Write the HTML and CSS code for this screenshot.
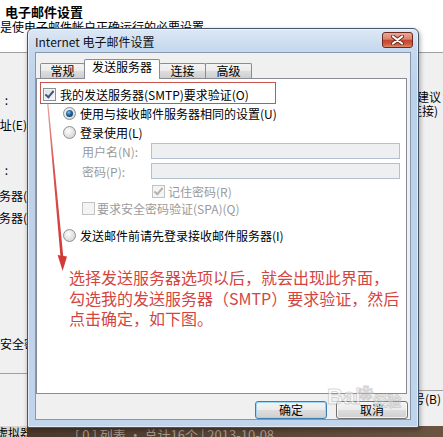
FILE: index.html
```html
<!DOCTYPE html>
<html lang="zh-CN">
<head>
  <meta charset="UTF-8">
  <meta name="viewport" content="width=device-width, initial-scale=1.0">
  <title>Internet 电子邮件设置</title>
  <link rel="stylesheet" href="styles.css">
</head>
<body>
  <div class="screen">

    <!-- account settings window behind the dialog -->
    <div class="bg-window">
      <div class="bg-head">
        <div class="bg-title">电子邮件设置</div>
        <div class="bg-sub">是使电子邮件帐户正确运行的必要设置。</div>
      </div>
      <div class="bg-body">
        <div class="bg-left">
          <div class="bg-label short f-name">您的姓名　:</div>
          <div class="bg-label f-mail">电子邮件地址(E)</div>
          <div class="bg-label short f-type">帐户类型　:</div>
          <div class="bg-label f-in">接收邮件服务器(</div>
          <div class="bg-label f-out">发送邮件服务器(</div>
          <div class="bg-label start f-spa">安全密码验证</div>
          <div class="bg-rule f-rule-left"></div>
        </div>
        <div class="bg-right">
          <div class="bg-label r-tip">建议：</div>
          <div class="bg-label r-link">连接)</div>
          <div class="bg-rule r-rule"></div>
          <div class="bg-label r-next">号(B)</div>
        </div>
      </div>
      <div class="bg-taskbar">
        <div class="task-left">虚拟器</div>
        <div class="task-right">[ 0 ] 列表 · 总计16个 | 2013-10-08</div>
      </div>
    </div>

    <!-- Internet 电子邮件设置 dialog -->
    <div class="dialog">
      <div class="titlebar">
        <div class="title">Internet 电子邮件设置</div>
        <div class="close">
          <svg width="13" height="10" viewBox="0 0 13 10">
            <path d="M2 1.5 L11 8.5 M11 1.5 L2 8.5" stroke="#6b2a20" stroke-width="4" stroke-linecap="round"/>
            <path d="M2 1.5 L11 8.5 M11 1.5 L2 8.5" stroke="#fff" stroke-width="2.2" stroke-linecap="round"/>
          </svg>
        </div>
      </div>

      <div class="client">
        <div class="tabs">
          <div class="tab t-general">常规</div>
          <div class="tab active t-send">发送服务器</div>
          <div class="tab t-conn">连接</div>
          <div class="tab t-adv">高级</div>
        </div>

        <div class="panel">
          <div class="opt main">
            <span class="check on"></span>
            <span>我的发送服务器(SMTP)要求验证(O)</span>
          </div>
          <div class="opt sub">
            <span class="radio on"></span>
            <span>使用与接收邮件服务器相同的设置(U)</span>
          </div>
          <div class="opt sub">
            <span class="radio"></span>
            <span>登录使用(L)</span>
          </div>
          <div class="field">
            <span class="field-label">用户名(N):</span>
            <span class="field-input"></span>
          </div>
          <div class="field">
            <span class="field-label">密码(P):</span>
            <span class="field-input"></span>
          </div>
          <div class="opt remember off">
            <span class="check on disabled"></span>
            <span>记住密码(R)</span>
          </div>
          <div class="opt spa off">
            <span class="check disabled"></span>
            <span>要求安全密码验证(SPA)(Q)</span>
          </div>
          <div class="opt sub last">
            <span class="radio"></span>
            <span>发送邮件前请先登录接收邮件服务器(I)</span>
          </div>
        </div>

        <div class="buttons">
          <button class="btn default">确定</button>
          <button class="btn">取消</button>
        </div>
      </div>
    </div>

    <!-- red annotation drawn over the screenshot -->
    <div class="note-box"></div>
    <svg class="note-arrow" width="443" height="437" viewBox="0 0 443 437">
      <defs>
        <linearGradient id="fade" x1="0" y1="0" x2="0" y2="1">
          <stop offset="0" stop-color="#e7a3a0"/>
          <stop offset="0.4" stop-color="#d9534f"/>
          <stop offset="1" stop-color="#d33a37"/>
        </linearGradient>
      </defs>
      <polygon points="47.2,104 48.4,104 63.4,258 60.6,258" fill="url(#fade)"/>
      <polygon points="57.6,255 67,256.5 62.6,271" fill="#d33a37"/>
    </svg>
    <div class="note-text">
      选择发送服务器选项以后，就会出现此界面，<br>
      勾选我的发送服务器（SMTP）要求验证，然后<br>
      点击确定，如下图。
    </div>

    <div class="watermark"><span class="wm-bai">Bai</span><span class="wm-paw">❀</span><span class="wm-jy">经验</span></div>
  </div>
</body>
</html>
```

FILE: styles.css
```css
body {
  margin: 0;
  padding: 0;
  font-family: "Noto Sans CJK SC", "Liberation Sans", sans-serif;
  font-size: 12px;
  color: #000;
  background: #f0f0f0;
}

.screen {
  position: relative;
  width: 443px;
  height: 437px;
  overflow: hidden;
}

/* ---------- background window ---------- */

.bg-head {
  height: 52px;
  background: #fff;
  border-bottom: 1px solid #a0a0a0;
}

.bg-title {
  padding: 4px 0 0 5px;
  font-size: 13px;
  font-weight: bold;
  line-height: 15px;
}

.bg-sub {
  margin-top: 1px;
  line-height: 14px;
  white-space: nowrap;
}

.bg-body {
  height: 373px;
  display: flex;
  justify-content: space-between;
  background: #f0f0f0;
}

.bg-left {
  width: 27px;
  overflow: hidden;
  display: flex;
  flex-direction: column;
  align-items: flex-end;
}

.bg-right {
  width: 24px;
  overflow: hidden;
  display: flex;
  flex-direction: column;
  align-items: flex-start;
}

.bg-label {
  white-space: nowrap;
  line-height: 14px;
}

.bg-label.short { margin-right: 19px; }
.bg-label.start { align-self: flex-start; }

.bg-rule {
  align-self: stretch;
  height: 1px;
  background: #a0a0a0;
}

.f-name { margin-top: 40px; }
.f-mail { margin-top: 11px; }
.f-type { margin-top: 31px; }
.f-in { margin-top: 12px; }
.f-out { margin-top: 8px; }
.f-spa { margin-top: 112px; }
.f-rule-left { margin-top: 22px; }

.r-tip { margin-top: 37px; margin-left: -2px; line-height: 13px; }
.r-link { margin-top: 1px; margin-left: -9px; line-height: 13px; }
.r-rule { margin-top: 273px; }
.r-next { margin-top: 1px; margin-left: -6px; }

.bg-taskbar {
  height: 12px;
  display: flex;
  overflow: hidden;
}

.task-left {
  width: 27px;
  background: #d9d5cf;
  font-size: 12px;
  line-height: 14px;
  text-indent: -4px;
  white-space: nowrap;
  overflow: hidden;
}

.task-right {
  flex: 1;
  background: linear-gradient(90deg, #4b3a2d, #5d4737 60%, #6b5442);
  color: #a69a90;
  font-size: 13px;
  line-height: 17px;
  padding-left: 48px;
  white-space: nowrap;
  overflow: hidden;
}

/* ---------- dialog ---------- */

.dialog {
  position: absolute;
  left: 27px;
  top: 28px;
  width: 392px;
  height: 400px;
  box-sizing: border-box;
  padding: 0 7px 7px;
  border: 1px solid #45566b;
  border-radius: 6px 6px 2px 2px;
  background: linear-gradient(180deg, #dde8f5 0, #c5d8ee 22px, #bcd1ea 60px, #c0d5ec 100%);
  box-shadow: inset 0 0 0 1px rgba(255, 255, 255, 0.55), 1px 2px 5px rgba(0, 0, 0, 0.35);
  display: flex;
  flex-direction: column;
}

.titlebar {
  height: 23px;
  display: flex;
  align-items: flex-start;
}

.title {
  flex: 1;
  padding-top: 5px;
  font-size: 12px;
  line-height: 16px;
  color: #111;
}

.close {
  width: 31px;
  height: 16px;
  margin: 3px -2px 0 0;
  box-sizing: border-box;
  border: 1px solid #6e2a1f;
  border-radius: 3px;
  background: linear-gradient(180deg, #e9a898 0, #d9826c 45%, #c4432c 50%, #cf5a40 80%, #e08a6e 100%);
  display: flex;
  justify-content: center;
  align-items: center;
}

.client {
  flex: 1;
  background: #f0f0f0;
  border: 1px solid #8598b0;
  display: flex;
  flex-direction: column;
}

.tabs {
  height: 25px;
  padding-left: 4px;
  display: flex;
  align-items: flex-end;
  position: relative;
  z-index: 1;
}

.tab {
  height: 15px;
  box-sizing: border-box;
  margin-right: -1px;
  border: 1px solid #898c95;
  border-bottom: none;
  border-radius: 2px 2px 0 0;
  background: linear-gradient(180deg, #f4f4f4 0, #ebebeb 50%, #dddddd 51%, #cfcfcf 100%);
  text-align: center;
  line-height: 14px;
}

.tab.active {
  height: 20px;
  margin-bottom: -1px;
  background: #fff;
  line-height: 14px;
}

.t-general { width: 45px; }
.t-send { width: 76px; }
.t-conn { width: 47px; }
.t-adv { width: 47px; }

.panel {
  height: 316px;
  box-sizing: border-box;
  margin-right: 3px;
  padding-top: 6px;
  border: 1px solid #898c95;
  background: #fff;
}

.opt {
  display: flex;
  align-items: center;
  gap: 4px;
  height: 19px;
  white-space: nowrap;
}

.opt.main { padding-left: 6px; }
.opt.sub { padding-left: 26px; }
.opt.sub.last { margin-top: 10px; }

.opt.off { color: #9a9a9a; }

.opt.remember {
  height: 18px;
  margin-top: 2px;
  padding-left: 115px;
  gap: 3px;
}

.opt.spa {
  height: 16px;
  padding-left: 45px;
  gap: 2px;
}

.field {
  display: flex;
  align-items: center;
  height: 18px;
  padding: 0 6px 0 45px;
  color: #9a9a9a;
  white-space: nowrap;
}

.field + .field { margin-top: 2px; }

.field-label { width: 69px; }

.field-input {
  flex: 1;
  height: 16px;
  box-sizing: border-box;
  border: 1px solid #b5c0ce;
  background: #eeeff1;
}

/* checkboxes and radio buttons, Windows 7 look */
.check {
  position: relative;
  flex: none;
  width: 13px;
  height: 13px;
  box-sizing: border-box;
  border: 1px solid #8e8f8f;
  background: linear-gradient(135deg, #dcdee1, #f8f8f8);
  box-shadow: inset 0 0 0 1px #f4f4f4;
}

.check.on::after {
  content: "";
  position: absolute;
  left: 3px;
  top: 0;
  width: 3px;
  height: 7px;
  border: solid #3d5585;
  border-width: 0 2px 2px 0;
  transform: rotate(40deg);
}

.check.disabled {
  border-color: #c2c2c2;
  background: #f4f4f4;
}

.check.disabled.on::after { border-color: #b3b3b3; }

.radio {
  position: relative;
  flex: none;
  width: 13px;
  height: 13px;
  box-sizing: border-box;
  border: 1px solid #8e8f8f;
  border-radius: 50%;
  background: radial-gradient(circle at 40% 35%, #fdfdfd 0, #e6e6e6 45%, #c9cbcd 100%);
}

.radio.on::after {
  content: "";
  position: absolute;
  left: 2px;
  top: 2px;
  width: 7px;
  height: 7px;
  border-radius: 50%;
  background: radial-gradient(circle at 40% 35%, #7fc1ee 0, #1f5d9c 45%, #0b2c55 100%);
}

.buttons {
  display: flex;
  justify-content: flex-end;
  gap: 9px;
  padding: 7px 2px 0 0;
}

.btn {
  width: 72px;
  height: 18px;
  padding: 0;
  font-family: inherit;
  font-size: 12px;
  line-height: 14px;
  color: #000;
  border: 1px solid #707070;
  border-radius: 3px;
  background: linear-gradient(180deg, #f4f4f4 0, #ebebeb 50%, #dddddd 51%, #cfcfcf 100%);
  box-shadow: inset 0 0 0 1px rgba(255, 255, 255, 0.7);
}

.btn.default {
  border-color: #3c7fb1;
  box-shadow: inset 0 0 0 1px #9fd6f5;
}

/* ---------- annotation ---------- */

.note-box {
  position: absolute;
  left: 40px;
  top: 82px;
  width: 236px;
  height: 22px;
  box-sizing: border-box;
  border: 1px solid #c9534d;
}

.note-arrow {
  position: absolute;
  left: 0;
  top: 0;
}

.note-text {
  position: absolute;
  left: 69px;
  top: 267px;
  font-size: 16px;
  line-height: 20.5px;
  color: #d4453f;
  white-space: nowrap;
}

.watermark {
  position: absolute;
  left: 327px;
  top: 382px;
  display: flex;
  align-items: flex-end;
  color: rgba(255, 255, 255, 0.55);
  -webkit-text-stroke: 1px rgba(140, 140, 140, 0.35);
  font-family: "Liberation Sans", sans-serif;
  font-weight: bold;
  pointer-events: none;
}

.wm-bai { font-size: 22px; line-height: 30px; }
.wm-paw { font-size: 14px; line-height: 30px; align-self: flex-start; margin: -4px 0 0 -2px; }
.wm-jy { font-family: "Noto Sans CJK SC", sans-serif; font-size: 14px; line-height: 24px; }
```
